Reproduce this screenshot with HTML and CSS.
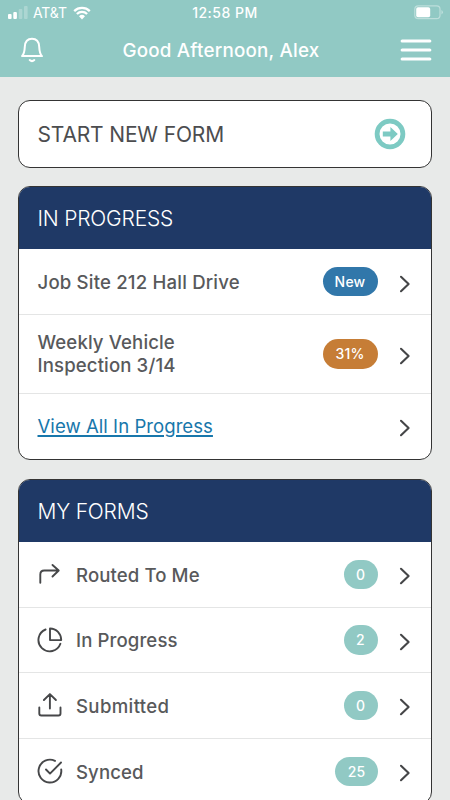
FILE: index.html
```html
<!DOCTYPE html>
<html lang="en">
<head>
<meta charset="utf-8">
<meta name="viewport" content="width=device-width, initial-scale=1">
<title>Forms</title>
<link rel="stylesheet" href="styles.css">
</head>
<body>
<svg class="defs" width="0" height="0" aria-hidden="true">
  <symbol id="chevron" viewBox="0 0 12 18"><path d="M2 1.8 9.6 9 2 16.2"/></symbol>
</svg>
<header class="top">
  <div class="status">
    <div class="carrier">
      <svg class="signal" width="20" height="13" viewBox="0 0 20 13"><rect x="0" y="8" width="3.6" height="5" rx="1"/><rect x="5.3" y="6" width="3.6" height="7" rx="1"/><g opacity=".25"><rect x="10.7" y="3" width="3.6" height="10" rx="1"/><rect x="16" y="0" width="3.6" height="13" rx="1"/></g></svg>
      <span class="network">AT&amp;T</span>
      <svg class="wifi" width="18" height="14" viewBox="0 0 18 14"><path d="M1.2 5.1a11.2 11.2 0 0 1 15.6 0M3.9 8a7.3 7.3 0 0 1 10.2 0"/><path class="dot" d="M6 10.2a4.3 4.3 0 0 1 6 0l-3 3.2z"/></svg>
    </div>
    <span class="time">12:58 PM</span>
    <svg class="battery" width="30" height="15" viewBox="0 0 30 15"><rect class="shell" x=".8" y=".8" width="25.2" height="12.8" rx="3.4"/><rect class="charge" x="2.2" y="2.2" width="14" height="10" rx="1.8"/><path class="tip" d="M27.5 5v4.6q1.3-.8 1.3-2.3T27.5 5z"/></svg>
  </div>
  <div class="bar">
    <svg class="bell" width="24" height="26" viewBox="0 0 24 26"><path d="M2 19.1C4.3 16.8 4.6 14 4.8 9.7 5.1 4.5 7.7 1.8 12 1.8s6.9 2.7 7.2 7.9c.2 4.3.5 7.1 2.8 9.4z"/><path d="M9.7 23.1q2.3 2.1 4.6 0"/></svg>
    <h1 class="greeting">Good Afternoon, Alex</h1>
    <svg class="menu" width="32" height="24" viewBox="0 0 32 24"><path d="M2.2 3h27.6M2.2 12h27.6M2.2 21h27.6"/></svg>
  </div>
</header>
<main class="content">
  <section class="card start">
    <span class="start-label">START NEW FORM</span>
    <svg class="go" width="32" height="32" viewBox="0 0 32 32"><circle cx="16" cy="16" r="12.9"/><path d="M8.8 13.4h7.6V9L23.8 16l-7.4 7v-4.4H8.8z"/></svg>
  </section>
  <section class="card progress">
    <h2 class="head"><span>IN PROGRESS</span></h2>
    <div class="row"><span class="label job">Job Site 212 Hall Drive</span><span class="pill blue">New</span><svg class="chevron"><use href="#chevron"/></svg></div>
    <div class="row tall"><span class="label weekly">Weekly Vehicle<br>Inspection 3/14</span><span class="pill orange">31%</span><svg class="chevron"><use href="#chevron"/></svg></div>
    <div class="row all"><a class="label link">View All In Progress</a><svg class="chevron"><use href="#chevron"/></svg></div>
  </section>
  <section class="card forms">
    <h2 class="head"><span>MY FORMS</span></h2>
    <div class="row"><svg class="icon" viewBox="0 0 26 26"><path d="M3.3 21.8v-8.3q0-4 4-4H21.5M15.500 4l6.200 5.500-6.200 6"/></svg><span class="label">Routed To Me</span><span class="pill count">0</span><svg class="chevron"><use href="#chevron"/></svg></div>
    <div class="row"><svg class="icon" viewBox="0 0 26 26"><path d="M8.600 2.500a11.300 11.300 0 1 0 14.800 14.300M13 1.500v11.600h11.200A11.200 11.400 0 0 0 13 1.500z"/></svg><span class="label">In Progress</span><span class="pill count">2</span><svg class="chevron"><use href="#chevron"/></svg></div>
    <div class="row"><svg class="icon" viewBox="0 0 26 26"><path d="M2.300 15.500v6q0 2 2 2h17.200q2 0 2-2v-6M12.900 16.500V2.200M6.900 8l6-5.900L18.900 8"/></svg><span class="label submitted">Submitted</span><span class="pill count">0</span><svg class="chevron"><use href="#chevron"/></svg></div>
    <div class="row"><svg class="icon" viewBox="0 0 26 26"><path d="M18 2.900A11.400 11.400 0 1 0 24.200 11.500M9 11.500l4 4.100L24 4.500"/></svg><span class="label">Synced</span><span class="pill count">25</span><svg class="chevron"><use href="#chevron"/></svg></div>
  </section>
</main>
</body>
</html>
```

FILE: styles.css
```css
* { box-sizing: border-box; }
html, body { height: 100%; overflow: hidden; }
body { margin: 0; background: #e8eae9; font-family: Inter, "Liberation Sans", sans-serif; color: #58595b; }
h1, h2 { margin: 0; font-weight: 400; }
.defs { position: absolute; }
svg { flex: none; display: block; }

.top { height: 77px; background: #91c9c4; color: #fff; }
.status { height: 25px; display: grid; grid-template-columns: 1fr auto 1fr; align-items: center; padding: 0 6px 0 8px; }
.carrier { display: flex; align-items: center; }
.signal { fill: #fff; }
.network { font-size: 14px; letter-spacing: -0.1px; margin-left: 5px; }
.wifi { margin-left: 6px; fill: none; stroke: #fff; stroke-width: 2.3; }
.wifi .dot { fill: #fff; stroke: none; }
.time { font-size: 14px; font-weight: 550; letter-spacing: 0.5px; margin-right: 2px; }
.battery { justify-self: end; }
.shell { fill: none; stroke: #fff; stroke-opacity: .4; stroke-width: 1.2; }
.charge { fill: #fff; }
.tip { fill: #fff; opacity: .45; }
.bar { height: 50px; display: grid; grid-template-columns: 75px 1fr 85px; align-items: center; padding: 0 18px 0 20px; }
.bell { fill: none; stroke: #fff; stroke-width: 2; stroke-linejoin: round; stroke-linecap: round; }
.greeting { font-size: 18.8px; font-weight: 540; letter-spacing: 0.22px; text-align: center; white-space: nowrap; }
.menu { justify-self: end; stroke: #fff; stroke-width: 3.2; stroke-linecap: round; }

.content { padding: 22.5px 18px 0; }
.card { background: #fff; border: 1px solid #343434; border-radius: 12px; overflow: hidden; }
.start { height: 68px; display: flex; align-items: center; justify-content: space-between; padding: 0 25px 0 18.5px; }
.start-label { font-size: 21px; letter-spacing: -0.16px; padding-top: 2px; color: #4c4d4f; }
.go circle { fill: none; stroke: #7dcac3; stroke-width: 4.8; }
.go path { fill: #7dcac3; }
.progress { margin-top: 18.5px; height: 274px; }
.forms { margin-top: 19px; height: 325px; }
.head { height: 62px; display: flex; align-items: center; padding: 1px 18px 0 18.5px; background: #1f3966; color: #fff; font-size: 21px; font-weight: 300; letter-spacing: -0.2px; }
.row { height: 66px; display: flex; align-items: center; padding: 0 20.5px 0 18.5px; border-bottom: 1px solid #e4e5e5; }
.forms .row { height: 65.5px; }
.row.tall { height: 78.5px; }
.row.all { height: 65px; }
.row:last-child { border-bottom: 0; }
.label { flex: 1; padding-top: 1px; font-size: 18.6px; line-height: 23px; font-weight: 530; letter-spacing: 0.1px; white-space: nowrap; }
.forms .label { padding-top: 1.5px; }
.job { letter-spacing: 0.18px; }
.weekly { padding-top: 0.5px; letter-spacing: 0.12px; }
.submitted { letter-spacing: 0.35px; }
.link { color: #1877ab; font-weight: 400; letter-spacing: 0.03px; text-decoration: underline; text-decoration-thickness: 1.5px; text-underline-offset: 2px; }
.icon { width: 26px; height: 26px; margin-right: 13px; margin-left: -0.5px; fill: none; stroke: #464749; stroke-width: 1.9; stroke-linecap: round; stroke-linejoin: round; }
.pill { height: 29.5px; line-height: 30px; border-radius: 15px; color: #fff; font-size: 14px; font-weight: 550; letter-spacing: 0.2px; text-align: center; padding: 0 12.2px; }
.blue, .orange { width: 55px; padding: 0; }
.blue { background: #3177aa; }
.orange { background: #c67d36; }
.count { background: #91c9c4; min-width: 34px; }
.chevron { width: 12px; height: 18px; margin-left: 21px; position: relative; top: 2px; fill: none; stroke: #454648; stroke-width: 2.1; stroke-linecap: round; stroke-linejoin: round; }
```
